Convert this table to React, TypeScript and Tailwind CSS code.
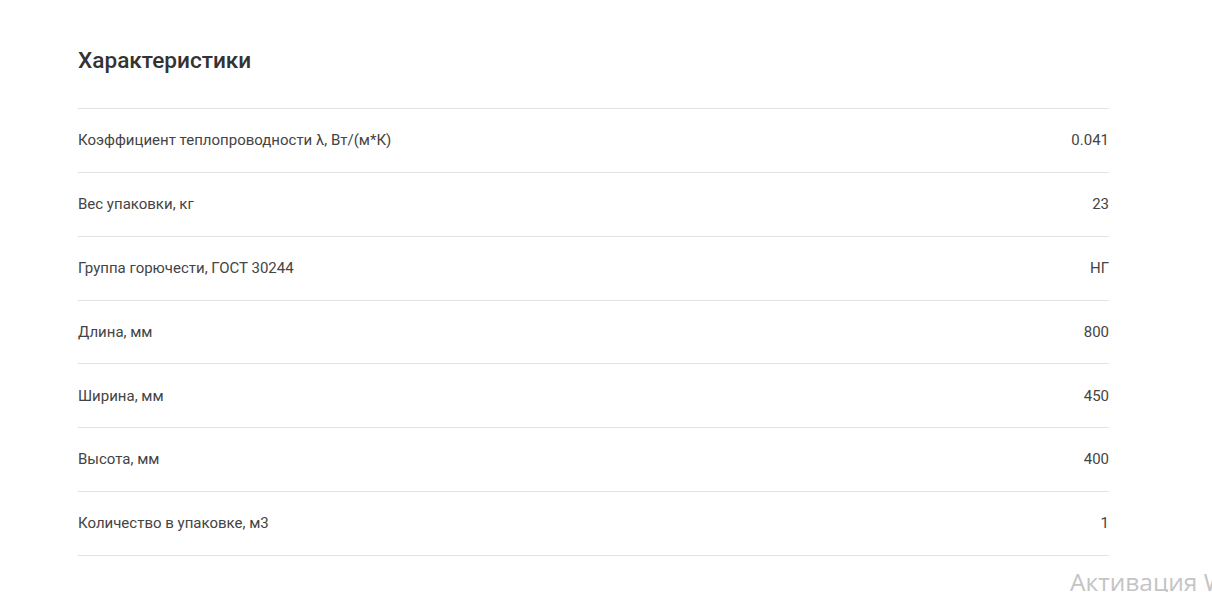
const specs = [
  { name: "Коэффициент теплопроводности λ, Вт/(м*К)", value: "0.041" },
  { name: "Вес упаковки, кг", value: "23" },
  { name: "Группа горючести, ГОСТ 30244", value: "НГ" },
  { name: "Длина, мм", value: "800" },
  { name: "Ширина, мм", value: "450" },
  { name: "Высота, мм", value: "400" },
  { name: "Количество в упаковке, м3", value: "1" },
];

export default function App() {
  return (
    <div className="relative h-[592px] w-full overflow-hidden bg-white font-['Roboto',sans-serif] text-[#444]">
      <div className="ml-[78px] w-[1031px] pt-[47px]">
        <h2 className="h-[28px] text-[22.6px] font-medium leading-[28px] text-[#333]">
          Характеристики
        </h2>
        <div className="mt-[33px] border-b border-[#e3e3e3]">
          {specs.map((s) => (
            <div
              key={s.name}
              className="flex h-[63.85px] items-center justify-between border-t border-[#e3e3e3] text-[15px]"
            >
              <span>{s.name}</span>
              <span>{s.value}</span>
            </div>
          ))}
        </div>
      </div>
      {/* windows activation watermark */}
      <div className="absolute left-[1070px] top-[565px] whitespace-nowrap font-['Open_Sans',sans-serif] text-[24.5px] leading-[34px] text-[#c4c4c4]">
        Активация Windows
      </div>
    </div>
  );
}
